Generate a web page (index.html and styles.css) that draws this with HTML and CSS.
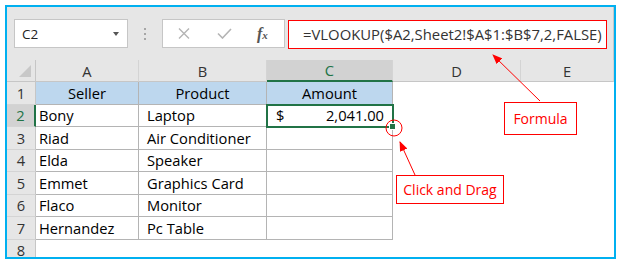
FILE: index.html
```html
<!DOCTYPE html>
<html lang="en">
<head>
    <meta charset="UTF-8">
    <title>VLOOKUP Fill Handle</title>
    <link rel="stylesheet" href="styles.css">
</head>
<body>
    <div class="frame">
        <div class="toolbar">
            <div class="namebox"><span>C2</span><span class="caret"></span></div>
            <div class="grip"><i></i><i></i><i></i></div>
            <div class="fbuttons">
                <svg class="ico-x" width="12" height="11" viewBox="0 0 12 11">
                    <path d="M1 0.5 L11 10.5 M11 0.5 L1 10.5" stroke="#b4b4b4" stroke-width="1.4" fill="none"/>
                </svg>
                <svg class="ico-check" width="15" height="11" viewBox="0 0 15 11">
                    <path d="M1 5.5 L5.5 10 L14 1" stroke="#b4b4b4" stroke-width="1.6" fill="none"/>
                </svg>
                <span class="fx">f<span>x</span></span>
            </div>
            <div class="formula">=VLOOKUP($A2,Sheet2!$A$1:$B$7,2,FALSE)</div>
        </div>

        <div class="sheet">
            <div class="corner"></div>
            <div class="col">A</div>
            <div class="col">B</div>
            <div class="col sel">C</div>
            <div class="col">D</div>
            <div class="col">E</div>

            <div class="row">1</div>
            <div class="cell t h">Seller</div>
            <div class="cell t h">Product</div>
            <div class="cell t h">Amount</div>
            <div class="cell"></div>
            <div class="cell"></div>

            <div class="row sel">2</div>
            <div class="cell t">Bony</div>
            <div class="cell t ind">Laptop</div>
            <div class="cell t num active"><span>$</span><span>2,041.00</span></div>
            <div class="cell"></div>
            <div class="cell"></div>

            <div class="row">3</div>
            <div class="cell t">Riad</div>
            <div class="cell t ind">Air Conditioner</div>
            <div class="cell t"></div>
            <div class="cell"></div>
            <div class="cell"></div>

            <div class="row">4</div>
            <div class="cell t">Elda</div>
            <div class="cell t ind">Speaker</div>
            <div class="cell t"></div>
            <div class="cell"></div>
            <div class="cell"></div>

            <div class="row">5</div>
            <div class="cell t">Emmet</div>
            <div class="cell t ind">Graphics Card</div>
            <div class="cell t"></div>
            <div class="cell"></div>
            <div class="cell"></div>

            <div class="row">6</div>
            <div class="cell t">Flaco</div>
            <div class="cell t ind">Monitor</div>
            <div class="cell t"></div>
            <div class="cell"></div>
            <div class="cell"></div>

            <div class="row">7</div>
            <div class="cell t">Hernandez</div>
            <div class="cell t ind">Pc Table</div>
            <div class="cell t"></div>
            <div class="cell"></div>
            <div class="cell"></div>

            <div class="row">8</div>
            <div class="cell"></div>
            <div class="cell"></div>
            <div class="cell"></div>
            <div class="cell"></div>
            <div class="cell"></div>
        </div>
    </div>

    <!-- callouts drawn over the sheet -->
    <svg class="callouts" width="624" height="265" viewBox="0 0 624 265">
        <defs>
            <marker id="head" markerWidth="10" markerHeight="8" refX="9" refY="4" orient="auto" markerUnits="userSpaceOnUse">
                <path d="M0 0 L10 4 L0 8 Z" fill="#f00"/>
            </marker>
        </defs>
        <circle cx="394" cy="128" r="8" stroke="#f00" stroke-width="1" fill="none"/>
        <line x1="540" y1="101" x2="493" y2="55" stroke="#f00" stroke-width="1" marker-end="url(#head)"/>
        <line x1="415" y1="175" x2="400" y2="142" stroke="#f00" stroke-width="1" marker-end="url(#head)"/>
    </svg>
    <div class="note note-formula">Formula</div>
    <div class="note note-drag">Click and Drag</div>
</body>
</html>
```

FILE: styles.css
```css
body {
    margin: 0;
    background-color: #fff;
    font-family: "Open Sans", "Noto Sans", sans-serif;
    color: #000;
}

.frame {
    position: relative;
    width: 607px;
    height: 250px;
    margin: 5px;
    border: 2px solid #00b0f0;
    background-color: #fff;
    overflow: hidden;
}

/* formula bar */
.toolbar {
    display: flex;
    align-items: flex-start;
    height: 53px;
    padding: 12px 0 0 7px;
    box-sizing: border-box;
    background-color: #e6e6e6;
    border-right: 1px solid #c6c6c6;
}

.namebox {
    display: flex;
    align-items: center;
    justify-content: space-between;
    width: 114px;
    height: 29px;
    box-sizing: border-box;
    padding: 0 8px 0 7px;
    background-color: #fff;
    border: 1px solid #c6c6c6;
    font-size: 13.5px;
    color: #222;
}

.caret {
    width: 0;
    height: 0;
    border-left: 3.5px solid transparent;
    border-right: 3.5px solid transparent;
    border-top: 4px solid #555;
}

.grip {
    display: flex;
    flex-direction: column;
    gap: 3px;
    margin: 9px 16px 0 16px;
}

.grip i {
    display: block;
    width: 2px;
    height: 2px;
    background-color: #a6a6a6;
}

.fbuttons {
    display: flex;
    align-items: center;
    width: 123px;
    height: 29px;
    box-sizing: border-box;
    padding-left: 15px;
    background-color: #fff;
    border: 1px solid #c6c6c6;
}

.ico-check {
    margin-left: 27px;
}

.fx {
    margin-left: 25px;
    font-family: "Liberation Serif", serif;
    font-style: italic;
    font-weight: bold;
    font-size: 16px;
    color: #555;
}

.fx span {
    font-size: 11px;
}

.formula {
    width: 319px;
    height: 29px;
    box-sizing: border-box;
    margin: 1px 0 0 3px;
    padding-left: 14px;
    background-color: #fff;
    border: 1.5px solid #f00;
    font-size: 14.85px;
    line-height: 26px;
    color: #333;
    white-space: nowrap;
}

/* worksheet grid */
.sheet {
    display: grid;
    grid-template-columns: 29px 103px 128px 126px 128px 93px;
    grid-template-rows: 22px repeat(8, 22.5px);
    font-size: 14.7px;
}

.sheet > div {
    display: flex;
    align-items: center;
    box-sizing: border-box;
    white-space: nowrap;
}

.corner {
    position: relative;
    background-color: #e6e6e6;
    border-right: 1px solid #c6c6c6;
    border-bottom: 1px solid #c6c6c6;
}

.corner::after {
    content: "";
    position: absolute;
    right: 4px;
    bottom: 4px;
    border-left: 12px solid transparent;
    border-bottom: 12px solid #c8c8c8;
}

.col {
    justify-content: center;
    background-color: #e6e6e6;
    border-right: 1px solid #d4d4d4;
    border-bottom: 1px solid #c6c6c6;
    color: #333;
}

.col.sel {
    background-color: #d2d2d2;
    color: #217346;
    border-bottom: 2px solid #217346;
}

.row {
    justify-content: center;
    background-color: #e6e6e6;
    border-right: 1px solid #c6c6c6;
    border-bottom: 1px solid #d4d4d4;
    color: #333;
}

.row.sel {
    background-color: #d2d2d2;
    color: #217346;
    border-right: 2px solid #217346;
}

.cell {
    padding-left: 3px;
}

.cell.t {
    border-right: 1px solid #b4b4b4;
    border-bottom: 1px solid #b4b4b4;
}

.cell.ind {
    padding-left: 8px;
}

.cell.h {
    justify-content: center;
    padding-left: 0;
    background-color: #bdd7ee;
}

.cell.num {
    justify-content: space-between;
    padding: 0 8px 0 9px;
}

.cell.active {
    position: relative;
    outline: 2px solid #217346;
    outline-offset: -1px;
}

/* fill handle */
.cell.active::after {
    content: "";
    position: absolute;
    right: -4px;
    bottom: -4px;
    width: 5px;
    height: 5px;
    background-color: #217346;
    border: 1px solid #fff;
}

/* callouts */
.callouts {
    position: absolute;
    top: 0;
    left: 0;
    pointer-events: none;
}

.note {
    position: absolute;
    display: flex;
    align-items: center;
    justify-content: center;
    box-sizing: border-box;
    background-color: #fff;
    border: 1px solid #f00;
    color: #f00;
    font-size: 14px;
}

.note-formula {
    left: 504px;
    top: 102px;
    width: 73px;
    height: 33px;
}

.note-drag {
    left: 396px;
    top: 175px;
    width: 108px;
    height: 29px;
}
```
